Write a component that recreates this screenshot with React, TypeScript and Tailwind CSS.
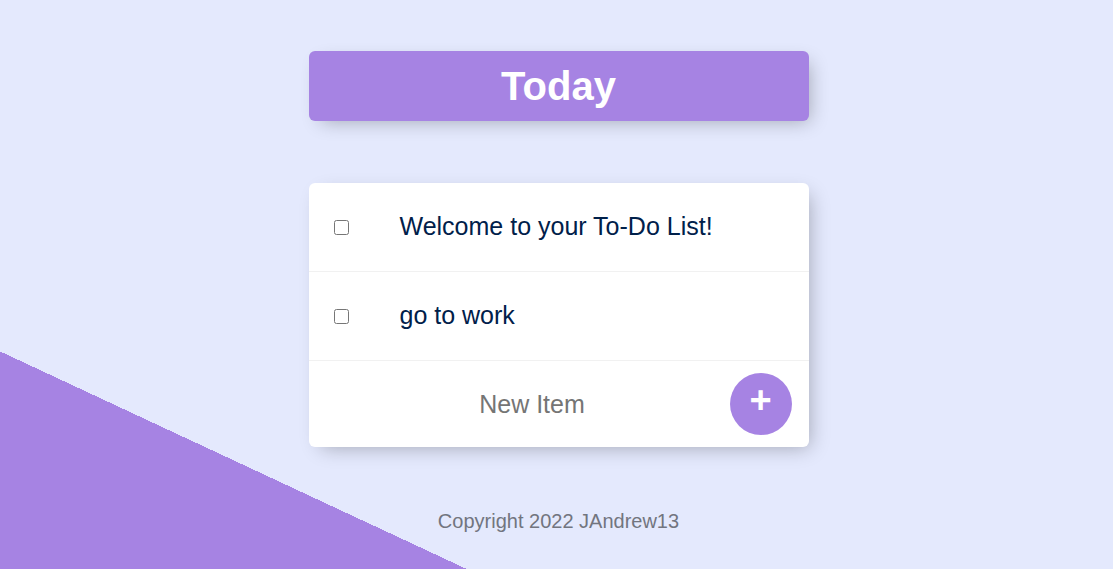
import React, { useState } from "react";

export default function App() {
  const [items] = useState<string[]>(["Welcome to your To-Do List!", "go to work"]);

  return (
    <div className="h-[569px] w-full overflow-hidden bg-[linear-gradient(205deg,#E4E9FD_80%,#A683E3_80%)] font-['Liberation_Sans',Arial,sans-serif] flex flex-col items-center pt-[51px] pl-[4px]">
      <div className="w-[500px] h-[70px] bg-[#A683E3] rounded-[6px] shadow-[6px_6px_19px_-6px_rgba(0,0,0,0.3)] flex items-center justify-center">
        <h1 className="text-[40px] font-bold text-white leading-none">Today</h1>
      </div>

      <div className="mt-[62px] w-[500px] bg-white rounded-[6px] shadow-[6px_6px_19px_-6px_rgba(0,0,0,0.3)]">
        {items.map((item) => (
          <div key={item} className="flex items-center h-[89px] border-b border-[#F1F1F1]">
            <input type="checkbox" className="mx-[25px] w-[15px] h-[15px]" />
            <p className="pl-[26px] text-[25px] text-[#00204A]">{item}</p>
          </div>
        ))}
        <form className="flex items-center h-[86px] pl-[31px]" onSubmit={(e) => e.preventDefault()}>
          <input
            type="text"
            placeholder="New Item"
            className="w-[385px] h-[75px] text-center text-[25px] bg-transparent outline-none placeholder:text-[#757575]"
          />
          <button
            type="submit"
            className="ml-[5px] w-[62px] h-[62px] rounded-full bg-[#A683E3] text-white text-[38px] font-bold leading-none pb-[8px] flex items-center justify-center"
          >
            +
          </button>
        </form>
      </div>

      <footer className="mt-[59px] text-[20px] text-[#72757F]">Copyright 2022 JAndrew13</footer>
    </div>
  );
}
